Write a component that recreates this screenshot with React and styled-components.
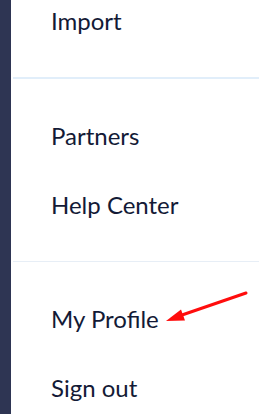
import React from "react";
import styled, { createGlobalStyle } from "styled-components";

const Global = createGlobalStyle`
  html, body { margin: 0; padding: 0; background: #ffffff; overflow: hidden; }
  body { font-family: Lato, "Noto Sans", sans-serif; }
`;

const Layout = styled.div`
  display: flex;
  height: 414px;
  overflow: hidden;
`;

const Sidebar = styled.div`
  width: 11px;
  flex: none;
  background: #2e3553;
`;

const Panel = styled.div`
  flex: 1;
  padding-left: 2px;
  display: flex;
  flex-direction: column;
`;

const Menu = styled.nav`
  margin-top: -36px;
  display: flex;
  flex-direction: column;
`;

const Group = styled.ul`
  list-style: none;
  margin: 0;
  padding: 22px 0;
  border-bottom: ${(p) => p.$divider || "none"};
`;

const Item = styled.li`
  position: relative;
  padding: 20px 0 20px 38px;
  font-size: 24px;
  line-height: 29px;
  color: #131a36;
`;

const Arrow = styled.svg`
  position: absolute;
  left: 150px;
  top: 0;
  width: 100px;
  height: 45px;
  overflow: visible;
`;

export default function App() {
  return (
    <>
      <Global />
      <Layout>
        <Sidebar />
        <Panel>
          <Menu>
            <Group $divider="2px solid #e1eefa">
              <Item>Import</Item>
            </Group>
            <Group $divider="1px solid #e7eef6">
              <Item>Partners</Item>
              <Item>Help Center</Item>
            </Group>
            <Group>
              <Item>
                My Profile
                <Arrow viewBox="0 0 100 45">
                  <line x1="83" y1="9" x2="19" y2="31" stroke="#ff0d0d" strokeWidth="3" strokeLinecap="round" />
                  <polygon points="3,37 18,25.5 22,36.6" fill="#ff0d0d" />
                </Arrow>
              </Item>
              <Item>Sign out</Item>
            </Group>
          </Menu>
        </Panel>
      </Layout>
    </>
  );
}
